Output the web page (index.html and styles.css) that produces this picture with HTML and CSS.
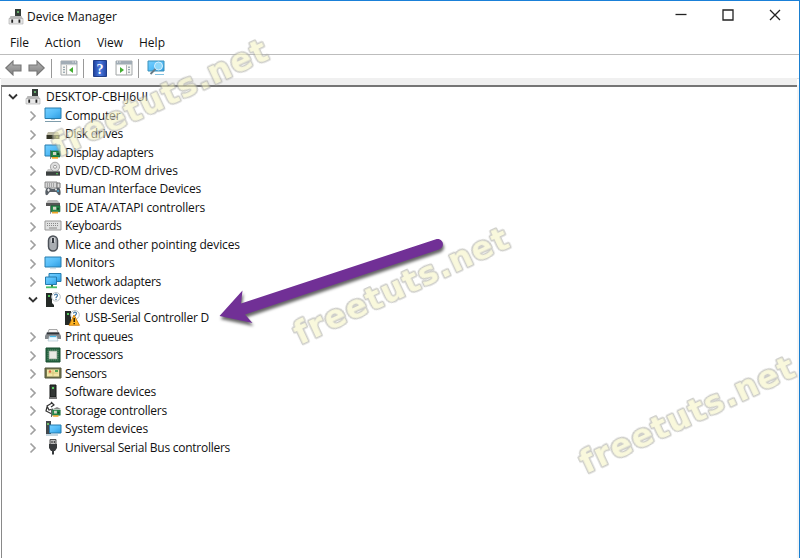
FILE: index.html
```html
<!DOCTYPE html>
<html lang="en">
<head>
<meta charset="utf-8">
<title>Device Manager</title>
<link rel="stylesheet" href="styles.css">
</head>
<body>
<svg class="defs" width="0" height="0" aria-hidden="true">
  <defs>
    <linearGradient id="blue" x2="1" y2="1"><stop stop-color="#75cfff"/><stop offset=".5" stop-color="#55bdf8"/><stop offset="1" stop-color="#2b9be0"/></linearGradient>
    <linearGradient id="help" x2="1" y2="0"><stop stop-color="#1d3f9c"/><stop offset=".5" stop-color="#4b7be0"/><stop offset="1" stop-color="#2446a4"/></linearGradient>
    <linearGradient id="steel" x2="0" y2="1"><stop stop-color="#b5b5b5"/><stop offset="1" stop-color="#808080"/></linearGradient>
    <symbol id="right" viewBox="0 0 8 12"><path d="M1.500 1.500 6 6l-4.500 4.500" fill="none" stroke="#a0a0a0" stroke-width="1.700"/></symbol>
    <symbol id="down" viewBox="0 0 10 8"><path d="M1 1.500 5 5.500l4-4" fill="none" stroke="#333" stroke-width="1.800"/></symbol>
    <symbol id="pc" viewBox="0 0 16 16"><path d="M7 0h6v8H7z" fill="#343c38"/><path d="M9 2h2v2H9z" fill="#64a96a"/><path d="M2.500 7h11l1.500 3H1z" fill="#b8b8b8"/><path d="M1 9.500h14V15H1z" fill="#e6e6e6" stroke="#aaa" stroke-width=".6"/><path d="M3.300 10.500h1.800v3.200H3.300zM10.500 10.500h1.800v3.200h-1.800z" fill="#222"/></symbol>
    <symbol id="computer" viewBox="0 0 18 18"><path d="M1 2h16v10.500H1z" fill="url(#blue)" stroke="#267cae"/><path d="M7 13h4v1H7z" fill="#aac5d3"/><path d="M1 15.500h16" stroke="#7f9dac"/></symbol>
    <symbol id="disk" viewBox="0 0 18 18"><path d="m4 7-1.500 3h13L14 7z" fill="#bbb8a4"/><path d="M2.500 10h13v4h-13z" fill="#343527"/><path d="M12 11.500h2v1h-2z" fill="#a2b845"/></symbol>
    <symbol id="board" viewBox="0 0 11 9"><path d="M0 0v9" stroke="#666" stroke-width="1.500"/><path d="M1 1h9v6H1z" fill="#278a4b" stroke="#125c30" stroke-width=".6"/><path d="M3 2h3.200v3H3z" fill="#d2d5c4"/><path d="M7 3h2v2H7z" fill="#164f2c"/><path d="M2 7h6v1.700H2z" fill="#f0a62a"/></symbol>
    <symbol id="display" viewBox="0 0 18 18"><path d="M1 2h15v11H1z" fill="url(#blue)" stroke="#267cae"/><use href="#board" x="6" y="7" width="11" height="9"/></symbol>
    <symbol id="dvd" viewBox="0 0 18 18"><path d="m4 8-2 3h14l-2-3z" fill="#c8c8c8"/><circle cx="11" cy="5.800" r="4.600" fill="#ddd" stroke="#969696" stroke-width=".8"/><circle cx="11" cy="5.800" r="1.500" fill="#fff" stroke="#888" stroke-width=".8"/><path d="M2 10.500h14v4.200H2z" fill="#3d4141"/><path d="M12 12.300h2v1h-2z" fill="#59d45e"/></symbol>
    <symbol id="hid" viewBox="0 0 18 18"><path d="M1 2h12v6H1z" fill="#d6d6d6" stroke="#777" stroke-width=".8"/><path d="M3 4h8M3 6h8" stroke="#777" stroke-dasharray="1 1"/><path d="M13 3h3v5h-3z" fill="#ddd" stroke="#777"/><path d="M3 8c3-1 4 1 6 1s4-2 6-1c2 1 2 7 1 7-2 1-3-3-4-3H6c-1 0-2 4-4 3-1-1-1-6 1-7z" fill="#585f66"/><path d="M3 10h3M4.500 8.500v3" stroke="#eee"/><circle cx="12" cy="9.500" r="1" fill="#e5e5e5"/><circle cx="14" cy="11" r="1" fill="#45a9d5"/></symbol>
    <symbol id="ide" viewBox="0 0 18 18"><path d="M4 2h9l3 3H2z" fill="#bbb"/><path d="M2 5h14v3H2z" fill="#555"/><use href="#board" x="6" y="6.500" width="11" height="9.500"/></symbol>
    <symbol id="keyboard" viewBox="0 0 18 18"><path d="M1 4h16v9H1z" fill="#e0e1e1" stroke="#999"/><path d="M3 6.500h12M3 8.500h12" stroke="#888" stroke-dasharray="1 1"/><path d="M5 11h8" stroke="#888"/></symbol>
    <symbol id="mouse" viewBox="0 0 18 18"><rect x="4.500" y="1" width="9" height="15" rx="4.500" fill="#a9adb2" stroke="#4d5259" stroke-width="1.500"/><path d="M7 3q2-1.500 4 0v4H7z" fill="#d2d4d7"/><path d="M9 3v5" stroke="#252a31" stroke-width="1.800"/></symbol>
    <symbol id="monitor" viewBox="0 0 18 18"><path d="M1 3h16v10H1z" fill="url(#blue)" stroke="#267cae"/><path d="M6 14.700h6" stroke="#ccdbe2"/></symbol>
    <symbol id="network" viewBox="0 0 18 18"><path d="M5 1.500h12v8H5z" fill="url(#blue)" stroke="#267cae"/><path d="M1.500 5h11v7.500h-11z" fill="url(#blue)" stroke="#267cae"/><path d="M7 13h2v2H7z" fill="#347846"/><path d="M2 15.300h11" stroke="#49bd66" stroke-width="1.800"/></symbol>
    <symbol id="other" viewBox="0 0 18 18"><path d="M2 2h6v10l2 2v2H2z" fill="#252a28"/><path d="M4 4h2v2H4z" fill="#55c55c"/><circle cx="12" cy="5.800" r="4.300" fill="#fff" stroke="#bac2c7"/><path d="M10.500 4.500c0-2 3-1.600 3 .1 0 1.100-1.500 1-1.500 2.300M12 7.800v1.100" fill="none" stroke="#4478a5" stroke-width="1.200"/></symbol>
    <symbol id="warn" viewBox="0 0 18 18"><use href="#other" width="18" height="18"/><path d="m11 6-5 10.300h10.500z" fill="#ffb524" stroke="#cb7500" stroke-width=".8"/><path d="M11.200 9v4M11.200 14v1.300" stroke="#322000" stroke-width="1.500"/></symbol>
    <symbol id="printer" viewBox="0 0 18 18"><path d="M5 2.500h8l1 3H4z" fill="#f4f4f4" stroke="#888" stroke-width=".7"/><path d="M3 5h12l2 4v3h-4l-1-3H6l-1 3H1V9z" fill="#83888c"/><path d="M3 6.500h12" stroke="#303439" stroke-width="1.600"/><path d="M5.500 9h7l1.500 5H4z" fill="#eefaff" stroke="#a6bdc8" stroke-width=".6"/><path d="M6 9.500h6" stroke="#48b9e8" stroke-width="1.300"/></symbol>
    <symbol id="cpu" viewBox="0 0 18 18"><path d="M2 2h14v14H2z" fill="#276644" stroke="#174c2f"/><path d="M4 4h10v10H4z" fill="none" stroke="#729679" stroke-width=".7" stroke-dasharray="1 1"/><path d="M5.300 5.300h7.400v7.400H5.300z" fill="#e9e9e4" stroke="#cbd0c7"/></symbol>
    <symbol id="sensor" viewBox="0 0 18 18"><path d="M1 4h16v10H1z" fill="#777b4f" stroke="#51533a"/><path d="M3 5.500h12v7H3z" fill="#f2e7a8"/><path d="M4 9h10M9 6v6" stroke="#d6c779"/><circle cx="6" cy="7.500" r="1.300" fill="#df6843"/><path d="M11 6h3v2h-3z" fill="#55a958"/></symbol>
    <symbol id="software" viewBox="0 0 18 18"><path d="M6 2h6v12H6z" fill="#333735" stroke="#151716"/><path d="M8 4h2v2H8z" fill="#5bd066"/><path d="M5 14h8v2H5z" fill="#777"/></symbol>
    <symbol id="storage" viewBox="0 0 18 18"><path d="M8 2 3 5l2 4 4-1M7 1l3 3-3 2M3 6l-1 4 6 3" fill="none" stroke="#333" stroke-width="1.200"/><use href="#board" x="7" y="8" width="10.500" height="8"/><path d="m9 8 4-2 4 2z" fill="#888"/></symbol>
    <symbol id="system" viewBox="0 0 18 18"><path d="M2 1h5v13H2z" fill="#43494d"/><path d="M3 3h2v2H3z" fill="#6ebd67"/><path d="M5.500 5H17v8H5.500z" fill="url(#blue)" stroke="#267cae"/><path d="M2 15h12" stroke="#8bb0c4"/></symbol>
    <symbol id="usb" viewBox="0 0 18 18"><path d="M6 1.500h6V7H6z" fill="#bbb" stroke="#505050"/><path d="M7.500 3h1v2h-1zM9.800 3h1v2h-1z" fill="#333"/><path d="M5 6h8v4l-2 3H7L5 10z" fill="#383b3d"/><path d="M9 12v4.500" stroke="#383b3d" stroke-width="2"/></symbol>
    <symbol id="arrow" viewBox="0 0 17 16"><path d="M.8 8 8 1v4h8v6H8v4z" fill="url(#steel)" stroke="#777" stroke-width="1.100"/></symbol>
    <symbol id="panel" viewBox="0 0 18 16"><path d="M1 1h16v14H1z" fill="#f6f6f3" stroke="#a4a8aa"/><path d="M1 1h16v3.500H1z" fill="#a1acb5"/><path d="M12.500 2h1M15 2h1" stroke="#fff"/><path d="M6.500 5v10" stroke="#b5b5b5"/><path d="M3 7.200h2M3 9.700h2M3 12.200h2" stroke="#7b8f9c"/></symbol>
  </defs>
</svg>

<main class="window">
  <header class="titlebar">
    <svg class="app-icon"><use href="#pc"/></svg>
    <h1 data-fit="90">Device Manager</h1>
    <div class="controls">
      <svg viewBox="0 0 12 12"><path d="M.5 5.500h11"/></svg>
      <svg viewBox="0 0 12 12"><path d="M1 1h10v10H1z"/></svg>
      <svg viewBox="0 0 12 12"><path d="m1 1 10 10M11 1 1 11"/></svg>
    </div>
  </header>
  <nav class="menu"><span data-fit="19">File</span><span data-fit="36">Action</span><span data-fit="26">View</span><span data-fit="26">Help</span></nav>
  <div class="toolbar">
    <svg class="arrow"><use href="#arrow"/></svg>
    <svg class="arrow forward"><use href="#arrow"/></svg>
    <i></i>
    <svg class="tool" viewBox="0 0 18 16"><use href="#panel"/><path d="M8 6h8v8H8z" fill="#fff"/><path d="M13 7v6l-4-3z" fill="#43ad31"/></svg>
    <i></i>
    <svg class="help" viewBox="0 0 14 17"><path d="M.5.5h13v16H.5z" fill="url(#help)" stroke="#203e89"/><text x="7" y="13.500" text-anchor="middle">?</text></svg>
    <svg class="tool run" viewBox="0 0 18 16"><g transform="matrix(-1 0 0 1 18 0)"><use href="#panel"/></g><path d="M2 5.500h9V14H2z" fill="#fff"/><path d="M5 7v6l4-3z" fill="#43ad31"/></svg>
    <i></i>
    <svg class="scan" viewBox="0 0 18 18"><path d="M1 2h16v10H1z" fill="url(#blue)" stroke="#3b91ba"/><path d="M8 15.500h9" stroke="#83c1e0"/><circle cx="11.500" cy="7" r="4" fill="#8bd7fa" stroke="#d4efff"/><path d="m8.500 10-5 5" stroke="#687b86" stroke-width="1.800"/></svg>
  </div>
  <section class="tree">
    <div class="row root"><svg class="open"><use href="#down"/></svg><svg class="app-icon"><use href="#pc"/></svg><span data-fit="102">DESKTOP-CBHJ6UI</span></div>
    <div class="row"><svg class="closed"><use href="#right"/></svg><svg class="icon"><use href="#computer"/></svg><span data-fit="55.5">Computer</span></div>
    <div class="row"><svg class="closed"><use href="#right"/></svg><svg class="icon"><use href="#disk"/></svg><span data-fit="58">Disk drives</span></div>
    <div class="row"><svg class="closed"><use href="#right"/></svg><svg class="icon"><use href="#display"/></svg><span data-fit="88.5">Display adapters</span></div>
    <div class="row"><svg class="closed"><use href="#right"/></svg><svg class="icon"><use href="#dvd"/></svg><span data-fit="113">DVD/CD-ROM drives</span></div>
    <div class="row"><svg class="closed"><use href="#right"/></svg><svg class="icon"><use href="#hid"/></svg><span data-fit="136">Human Interface Devices</span></div>
    <div class="row"><svg class="closed"><use href="#right"/></svg><svg class="icon"><use href="#ide"/></svg><span data-fit="140">IDE ATA/ATAPI controllers</span></div>
    <div class="row"><svg class="closed"><use href="#right"/></svg><svg class="icon"><use href="#keyboard"/></svg><span data-fit="56.5">Keyboards</span></div>
    <div class="row"><svg class="closed"><use href="#right"/></svg><svg class="icon"><use href="#mouse"/></svg><span data-fit="175">Mice and other pointing devices</span></div>
    <div class="row"><svg class="closed"><use href="#right"/></svg><svg class="icon"><use href="#monitor"/></svg><span data-fit="49.5">Monitors</span></div>
    <div class="row"><svg class="closed"><use href="#right"/></svg><svg class="icon"><use href="#network"/></svg><span data-fit="96">Network adapters</span></div>
    <div class="row"><svg class="open"><use href="#down"/></svg><svg class="icon"><use href="#other"/></svg><span data-fit="74.5">Other devices</span></div>
    <div class="row child"><svg class="icon"><use href="#warn"/></svg><span data-fit="124">USB-Serial Controller D</span></div>
    <div class="row"><svg class="closed"><use href="#right"/></svg><svg class="icon"><use href="#printer"/></svg><span data-fit="68">Print queues</span></div>
    <div class="row"><svg class="closed"><use href="#right"/></svg><svg class="icon"><use href="#cpu"/></svg><span data-fit="58">Processors</span></div>
    <div class="row"><svg class="closed"><use href="#right"/></svg><svg class="icon"><use href="#sensor"/></svg><span data-fit="41.5">Sensors</span></div>
    <div class="row"><svg class="closed"><use href="#right"/></svg><svg class="icon"><use href="#software"/></svg><span data-fit="91">Software devices</span></div>
    <div class="row"><svg class="closed"><use href="#right"/></svg><svg class="icon"><use href="#storage"/></svg><span data-fit="102">Storage controllers</span></div>
    <div class="row"><svg class="closed"><use href="#right"/></svg><svg class="icon"><use href="#system"/></svg><span data-fit="83">System devices</span></div>
    <div class="row"><svg class="closed"><use href="#right"/></svg><svg class="icon"><use href="#usb"/></svg><span data-fit="165">Universal Serial Bus controllers</span></div>
  </section>
</main>

<svg class="overlay" viewBox="0 0 800 558">
  <g class="mark">
    <text transform="translate(59 157) rotate(-25)" textLength="233">freetuts.net</text>
    <text transform="translate(300 345) rotate(-25)" textLength="233">freetuts.net</text>
    <text transform="translate(586 474) rotate(-25)" textLength="233">freetuts.net</text>
  </g>
  <path class="pointer" d="M219.500 316 242.500 290.500 241 303.500 436 239.200C443 237.500 446 247 439 249.500L245 314.500 252.500 323z"/>
</svg>
<script src="fit.js"></script>
</body>
</html>
```
FILE: styles.css
```css
* { box-sizing: border-box; }
body { margin: 0; background: #fff; color: #111; font: 12px/18px "Open Sans", "Noto Sans", sans-serif; overflow: hidden; }
svg { display: block; flex: none; }
.defs { position: absolute; }
.window { width: 800px; height: 558px; border-top: 1px solid #1a80d8; border-right: 1px solid #1a7fd0; display: flex; flex-direction: column; }
.titlebar { height: 30px; display: flex; align-items: center; padding: 1px 18px 0 8px; }
.app-icon { width: 16px; height: 16px; }
h1 { margin: 1px 0 0 3px; font: inherit; white-space: nowrap; }
.controls { margin-left: auto; display: flex; gap: 35px; padding-bottom: 3px; }
.controls svg { width: 12px; height: 12px; fill: none; stroke: #222; stroke-width: 1.3; }
.menu { height: 24px; display: flex; padding: 3px 0 0 10px; gap: 16px; border-bottom: 1px solid #bdbdbd; white-space: nowrap; }
.toolbar { height: 24px; display: flex; align-items: center; padding: 3px 0 0 5px; border-bottom: 1px solid #dedede; }
.toolbar i { width: 1px; height: 19px; background: #999; flex: none; }
.arrow { width: 17px; height: 16px; }
.forward { transform: scaleX(-1); margin: 0 6px; }
.tool { width: 18px; height: 16px; margin: 0 5px 0 8px; }
.help { width: 14px; height: 17px; margin-left: 9px; }
.help text { fill: #fff; font: bold 14px "Liberation Serif", serif; }
.run { margin: 0 5px 0 8px; }
.scan { width: 18px; height: 18px; margin-left: 8px; }
.tree { flex: 1; margin: 6px 2px 0 1px; padding-top: 1px; border-top: 2px solid #757575; border-left: 1px solid #898989; box-shadow: 0 -7px #f0f0f0, 2px 0 #f5f5f5; }
.row { height: 18.45px; display: flex; align-items: center; padding-left: 26.5px; white-space: nowrap; }
.closed { width: 8px; height: 12px; margin: 1px 7px 0 0; }
.open { width: 10px; height: 8px; margin-right: 6px; margin-left: -1px; }
.icon { width: 18px; height: 18px; margin-right: 3.5px; margin-top: -1px; }
.root { padding-left: 7px; }
.root .app-icon { margin: 0 5px 0 1px; }
.child { padding-left: 61px; }
.child .icon { margin-right: 4px; }
.overlay { position: absolute; inset: 0; width: 800px; height: 558px; pointer-events: none; }
.mark { font: bold 32px "DejaVu Sans", sans-serif; fill: #f4f3c2; stroke: #a9a9a2; stroke-width: 3; paint-order: stroke; stroke-linejoin: round; opacity: .58; }
.pointer { fill: #713096; filter: drop-shadow(1px 3px 1.5px #0009); }
```
FILE: fit.js
```javascript
// Adjust tracking so each label has its intended width.
document.querySelectorAll('[data-fit]').forEach((label) => {
  const range = document.createRange();
  range.selectNodeContents(label);
  const width = range.getBoundingClientRect().width;
  const target = Number(label.dataset.fit);
  label.style.letterSpacing = `${(target - width) / label.textContent.length}px`;
});
```
